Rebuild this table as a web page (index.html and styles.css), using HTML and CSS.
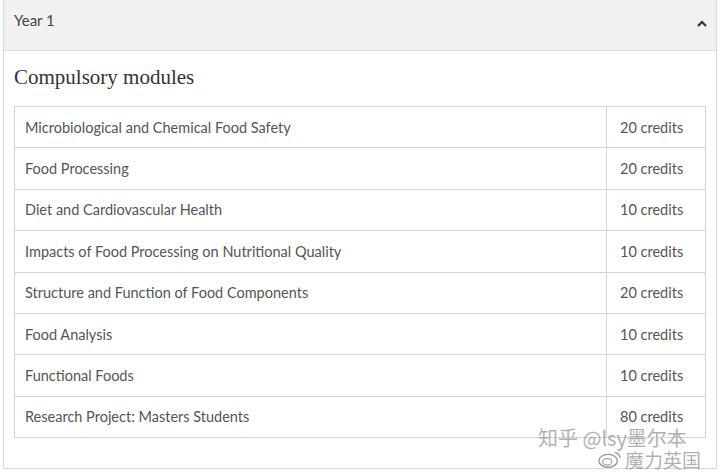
FILE: index.html
```html
<!DOCTYPE html>
<html>
<head>
<meta charset="utf-8">
<link rel="stylesheet" href="styles.css">
</head>
<body>
<div class="panel">
  <div class="panel-header">
    <span class="year">Year 1</span>
    <svg class="chev" width="10" height="7" viewBox="0 0 10 7"><polyline points="1,6 5,2 9,6" fill="none" stroke="#333" stroke-width="2.2"/></svg>
  </div>
  <div class="panel-body">
    <h2 class="title">Compulsory modules</h2>
    <table class="modules">
      <tr><td class="name">Microbiological and Chemical Food Safety</td><td class="cred">20 credits</td></tr>
      <tr><td class="name">Food Processing</td><td class="cred">20 credits</td></tr>
      <tr><td class="name">Diet and Cardiovascular Health</td><td class="cred">10 credits</td></tr>
      <tr><td class="name">Impacts of Food Processing on Nutritional Quality</td><td class="cred">10 credits</td></tr>
      <tr><td class="name">Structure and Function of Food Components</td><td class="cred">20 credits</td></tr>
      <tr><td class="name">Food Analysis</td><td class="cred">10 credits</td></tr>
      <tr><td class="name">Functional Foods</td><td class="cred">10 credits</td></tr>
      <tr><td class="name">Research Project: Masters Students</td><td class="cred">80 credits</td></tr>
    </table>
  </div>
</div>
<div class="watermark">
  <span class="wm1">知乎 @lsy墨尔本</span>
  <span class="wm2"><svg width="24" height="20" viewBox="0 0 26 20"><ellipse cx="11" cy="12" rx="10" ry="7" fill="none" stroke="#999" stroke-width="1.5"/><ellipse cx="10" cy="13" rx="5" ry="3.5" fill="none" stroke="#999" stroke-width="1.2"/><path d="M18 3 a6 6 0 0 1 6 6" fill="none" stroke="#999" stroke-width="1.5"/></svg>魔力英国</span>
</div>
</body>
</html>
```
FILE: styles.css
```css
html, body {
  margin: 0;
  padding: 0;
  background: #ffffff;
}
body {
  font-family: Lato, "Noto Sans", sans-serif;
  color: #555;
}
.panel {
  margin: 0 3px;
  width: 712px;
  border: 1px solid #dcdad6;
  border-top: none;
  box-sizing: content-box;
}
.panel-header {
  height: 51px;
  background: #f2f1ef;
  border-bottom: 1px solid #e0ded9;
  display: flex;
  align-items: center;
  justify-content: space-between;
  padding: 0 9px 0 10px;
  box-sizing: border-box;
}
.year {
  font-size: 15px;
  color: #444;
  margin-top: -11px;
}
.chev {
  margin-top: -4px;
}
.panel-body {
  padding: 0 10px 30px 10px;
}
.title {
  font-family: "Liberation Serif", serif;
  font-weight: normal;
  font-size: 21px;
  color: #333;
  margin: 0;
  padding: 14px 0 17px;
  line-height: 24px;
}
.modules {
  width: 100%;
  border-collapse: collapse;
  font-size: 14.5px;
}
.modules td {
  border: 1px solid #d6d4d0;
  height: 40.375px;
  padding: 0;
  color: #555;
}
.modules .name {
  padding-left: 10px;
}
.modules .cred {
  width: 85px;
  padding-left: 13px;
}
.watermark {
  position: absolute;
  left: 538px;
  top: 428px;
  color: rgba(150,150,150,0.75);
  font-family: "Noto Sans CJK SC", sans-serif;
}
.wm1 {
  display: block;
  font-size: 20px;
  line-height: 19px;
}
.wm2 {
  display: flex;
  align-items: center;
  gap: 3px;
  margin-top: 2px;
  margin-left: 60px;
  font-size: 19px;
  line-height: 19px;
}
```
